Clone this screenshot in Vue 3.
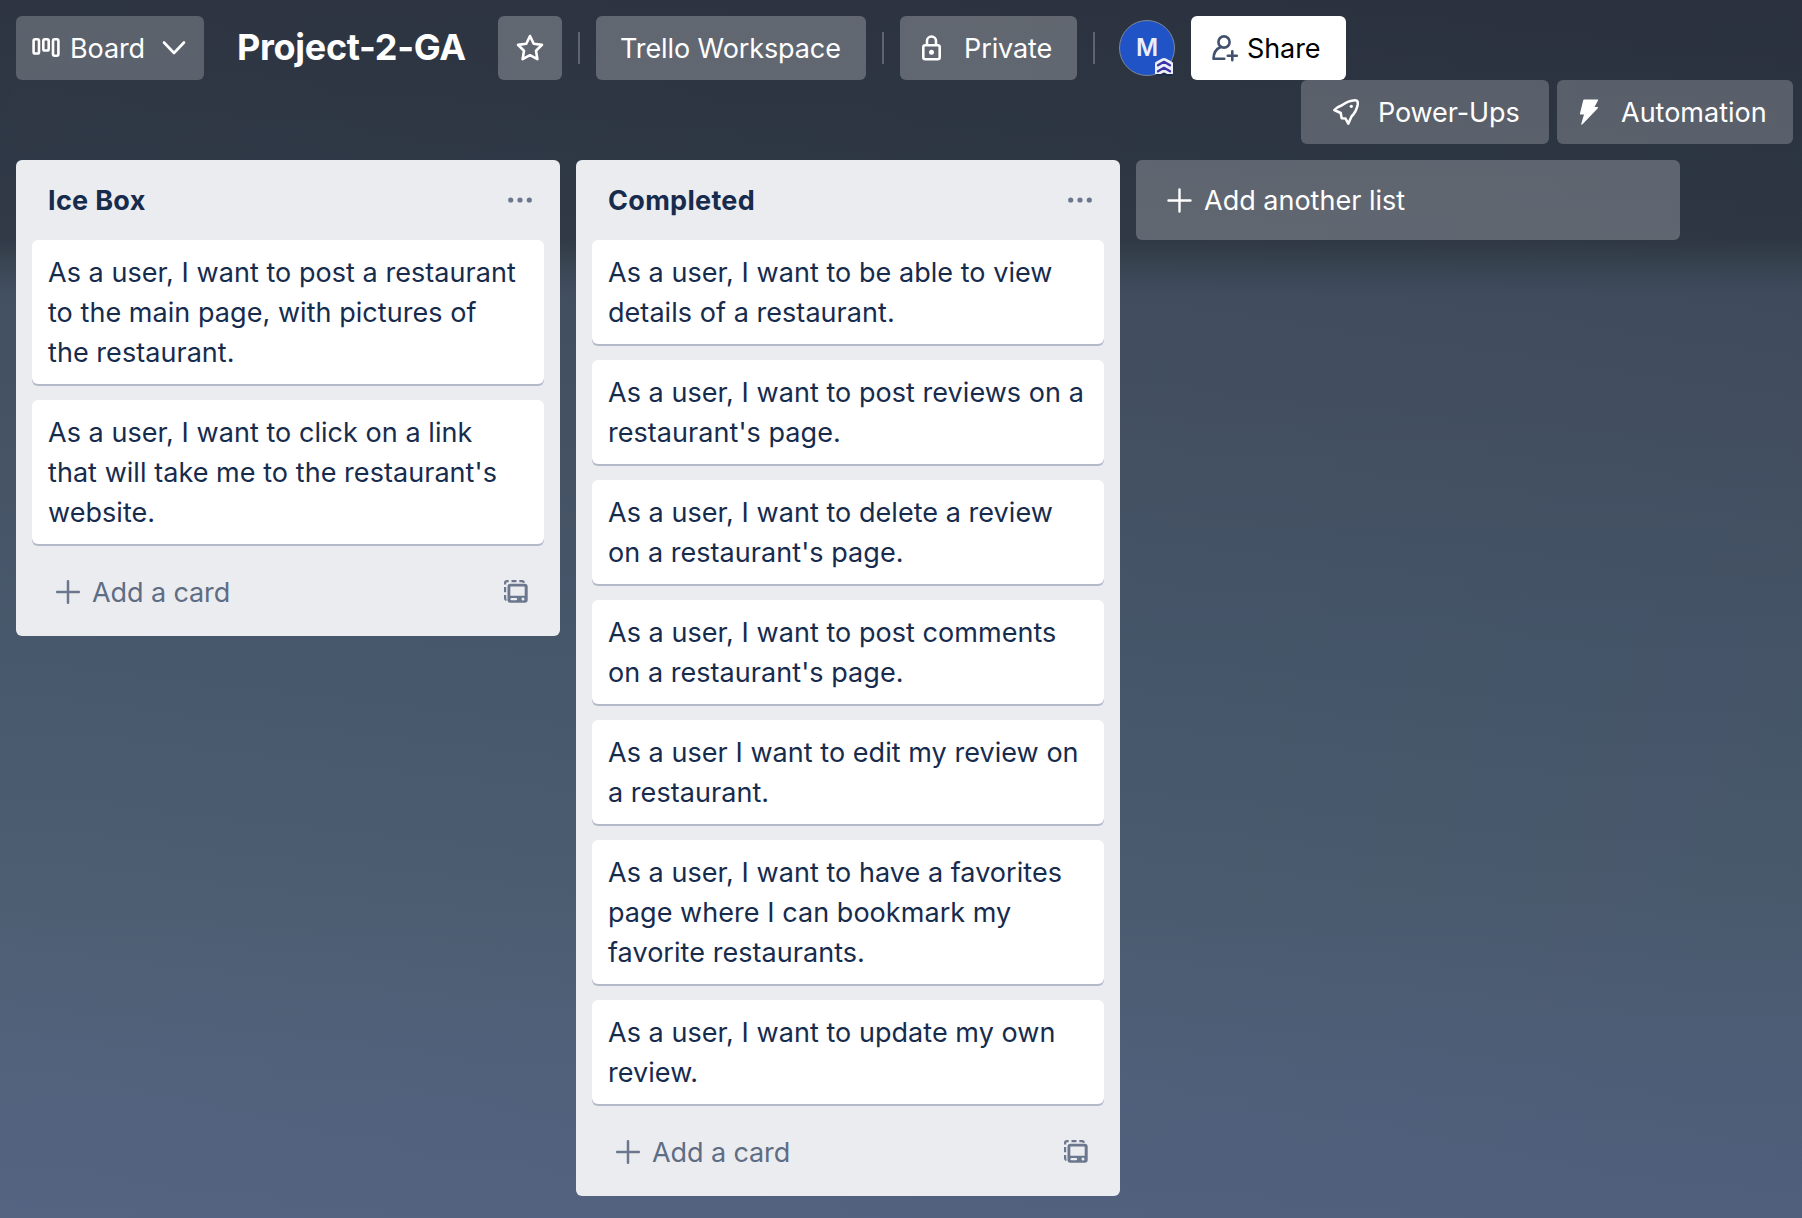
<script setup>
const lists = [
  {
    title: 'Ice Box',
    cards: [
      ['As a user, I want to post a restaurant', 'to the main page, with pictures of', 'the restaurant.'],
      ['As a user, I want to click on a link', "that will take me to the restaurant's", 'website.'],
    ],
  },
  {
    title: 'Completed',
    cards: [
      ['As a user, I want to be able to view', 'details of a restaurant.'],
      ['As a user, I want to post reviews on a', "restaurant's page."],
      ['As a user, I want to delete a review', "on a restaurant's page."],
      ['As a user, I want to post comments', "on a restaurant's page."],
      ['As a user I want to edit my review on', 'a restaurant.'],
      ['As a user, I want to have a favorites', 'page where I can bookmark my', 'favorite restaurants.'],
      ['As a user, I want to update my own', 'review.'],
    ],
  },
]
</script>

<template>
  <div class="app">
    <header class="header">
      <div class="row">
        <button class="btn board">
          <svg class="i-board" width="28" height="24" viewBox="0 0 28 24" fill="none" stroke="#fff" stroke-width="2.6">
            <rect x="1.6" y="3.3" width="5.4" height="14.2" rx="1.6" />
            <rect x="11.3" y="3.3" width="5.4" height="11.2" rx="1.6" />
            <rect x="21" y="3.3" width="5.4" height="16.4" rx="1.6" />
          </svg>
          <span>Board</span>
          <svg class="i-chev" width="24" height="16" viewBox="0 0 24 16" fill="none" stroke="#fff" stroke-width="2.6" stroke-linecap="round" stroke-linejoin="round">
            <path d="M2 2.5 12 13 22 2.5" />
          </svg>
        </button>
        <h1>Project-2-GA</h1>
        <button class="btn star">
          <svg width="30" height="30" viewBox="0 0 30 30" fill="none" stroke="#fff" stroke-width="2.6" stroke-linejoin="round">
            <path d="M15 3 L18.7 10.7 27 11.9 21 17.7 22.4 26.2 15 22.2 7.6 26.2 9 17.7 3 11.9 11.3 10.7Z" />
          </svg>
        </button>
        <i class="divider"></i>
        <button class="btn workspace"><span>Trello Workspace</span></button>
        <i class="divider"></i>
        <button class="btn private">
          <svg width="22" height="28" viewBox="0 0 22 28" fill="none" stroke="#fff" stroke-width="2.6">
            <rect x="3.3" y="11.3" width="16.4" height="14" rx="2" />
            <path d="M7 11V7a4.5 4.5 0 0 1 9 0v4" />
            <circle cx="11.5" cy="18.3" r="2.5" fill="#fff" stroke="none" />
          </svg>
          <span>Private</span>
        </button>
        <i class="divider"></i>
        <div class="avatar">
          <span>M</span>
          <svg class="badge" width="18" height="18" viewBox="0 0 18 18">
            <path d="M0 5.5Q0 4.500 1 3.800L6.500.7Q9-.6 11.500.7L17 3.800Q18 4.500 18 5.500V16H12L9 14.500 6 16H0Z" fill="#eceef6" />
            <path d="M1 17H6L9 15.500 12 17H17.500" fill="none" stroke="#172b4d" stroke-width="1.4" />
            <path d="M3 7.300 9 3.800 15 7.300M3 13.300 9 9.800 15 13.300" fill="none" stroke="#3a32a8" stroke-width="2.3" stroke-linecap="round" stroke-linejoin="round" />
          </svg>
        </div>
        <button class="btn share">
          <svg width="27" height="28" viewBox="0 0 27 28" fill="none" stroke="#42526e" stroke-width="2.6" stroke-linecap="round" stroke-linejoin="round">
            <circle cx="12" cy="8" r="5.6" />
            <path d="M8.600 13C4 15 1.500 19 1.500 24.700H12.300M20.300 17.200V26.200M15.800 21.700H24.800" />
          </svg>
          <span>Share</span>
        </button>
      </div>
      <div class="row tools">
        <button class="btn power">
          <svg width="28" height="28" viewBox="0 0 28 28" fill="none" stroke="#fff" stroke-width="2.5" stroke-linejoin="round">
            <path d="M9.500 7.500C13 5 18 2.500 23 2.300 25.700 2.200 26 4 25.700 6.500 25 11 22 16 19.500 18.500L16.300 25.700 13.500 20.500 9.700 20.300 8.700 15 2.300 12Q5 9 9.500 7.500Z" />
            <circle cx="19.3" cy="8.3" r="1.6" fill="#fff" stroke="none" />
          </svg>
          <span>Power-Ups</span>
        </button>
        <button class="btn auto">
          <svg width="20" height="28" viewBox="0 0 20 28" fill="#fff">
            <path d="M5.200 1.500H18.500Q19.500 1.500 19 2.500L15.500 9H18.300Q19.600 9 18.800 10.200L3.500 26.300Q1.800 27.500 2.300 25.700L5 16.500H1.500Q.7 16.500 1 15.500L4.200 2.300Q4.400 1.500 5.200 1.500Z" />
          </svg>
          <span>Automation</span>
        </button>
      </div>
    </header>

    <main class="lists">
      <section v-for="list in lists" :key="list.title" class="list">
        <div class="head">
          <h2>{{ list.title }}</h2>
          <svg width="24" height="6" viewBox="0 0 24 6" fill="#6b778c">
            <circle cx="2.7" cy="3" r="2.6" /><circle cx="12" cy="3" r="2.6" /><circle cx="21.3" cy="3" r="2.6" />
          </svg>
        </div>
        <article v-for="(card, i) in list.cards" :key="i" class="card">
          <div v-for="line in card" :key="line">{{ line }}</div>
        </article>
        <div class="foot">
          <svg width="24" height="24" viewBox="0 0 24 24" stroke="#6b778c" stroke-width="2.5" stroke-linecap="round"><path d="M12 1.200V22.800M1.200 12H22.800" /></svg>
          <span>Add a card</span>
          <svg class="template" width="24" height="24" viewBox="0 0 24 24" fill="none" stroke="#6b778c" stroke-width="2.2">
            <path d="M1.100 4.500V3Q1.100 1.200 3 1.200H4.700M7.500 1.200H12.500M15.300 1.200H18Q19.700 1.200 20 2.800M1.100 7V12.300M1.100 15V18Q1.100 19.700 2.500 19.800" />
            <path fill-rule="evenodd" stroke="none" fill="#6b778c" d="M6.300 3.700H20.700Q23.700 3.700 23.700 6.700V19.800Q23.700 22.800 20.700 22.800H6.300Q3.500 22.800 3.500 19.800V6.700Q3.500 3.700 6.300 3.700ZM7 6.500Q6.300 6.500 6.300 7.300V15.800H20.700V7.300Q20.700 6.500 20 6.500ZM7.600 17.900Q6.400 17.900 6.400 19.100T7.600 20.300H12Q13.200 20.300 13.200 19.100T12 17.900ZM19 17.600A1.500 1.500 0 1 0 19 20.600 1.500 1.500 0 0 0 19 17.600Z" />
          </svg>
        </div>
      </section>
      <button class="add-list">
        <svg width="25" height="25" viewBox="0 0 25 25" stroke="#fff" stroke-width="2.4" stroke-linecap="round"><path d="M12.500 1.500V23.500M1.500 12.500H23.500" /></svg>
        <span>Add another list</span>
      </button>
    </main>
  </div>
</template>

<style>
body { margin: 0; }
</style>

<style scoped>
* { box-sizing: border-box; }
.app {
  width: 1802px;
  height: 1218px;
  overflow: hidden;
  font-family: Inter, "Liberation Sans", sans-serif;
  font-size: 27px;
  font-weight: 440;
  color: #172b4d;
  background:
    linear-gradient(90deg, rgba(255, 255, 255, .012), rgba(0, 0, 0, .035)),
    linear-gradient(180deg, #2c3340 0, #2d3644 150px, #303846 240px, #374350 262px, #414e60 295px, #435062 400px, #46566a 640px, #4c5c70 900px, #50607a 1050px, #526280 1218px);
}
button { font: inherit; border: 0; margin: 0; padding: 0; text-align: left; }
svg { display: block; flex: none; }
.header { height: 160px; padding-top: 16px; }
.row { display: flex; height: 64px; padding-left: 16px; }
.btn {
  display: flex;
  align-items: center;
  height: 64px;
  border-radius: 6px;
  background: rgba(255, 255, 255, .22);
  color: #fff;
  letter-spacing: -.1px;
  white-space: nowrap;
}
.board { width: 188px; padding-left: 16px; }
.board span { margin-left: 10px; width: 76px; }
.i-chev { margin-left: 16px; }
h1 { margin: 0 0 0 33px; width: 261px; font-size: 36px; line-height: 62px; font-weight: 700; color: #fff; letter-spacing: -.3px; white-space: nowrap; }
.star { width: 64px; justify-content: center; background: rgba(255, 255, 255, .25); }
.divider { width: 2px; height: 32px; margin: 16px 16px 0; background: rgba(255, 255, 255, .24); }
.workspace { width: 270px; padding-left: 24px; background: rgba(255, 255, 255, .25); }
.private { width: 177px; padding-left: 20px; background: rgba(255, 255, 255, .25); }
.private span { margin-left: 22px; }
.avatar { position: relative; width: 56px; height: 56px; margin: 4px 16px 0 8px; border-radius: 50%; background: #2053c5; color: #e9eefb; font-size: 24px; font-weight: 600; text-align: center; border: 1px solid #7f8794; line-height: 54px; }
.badge { position: absolute; right: 1px; bottom: -1px; }
.share { width: 155px; padding-left: 21px; background: #fff; color: #000; }
.share span { margin-left: 8px; }
.tools { justify-content: flex-end; padding-right: 9px; gap: 8px; }
.power { width: 248px; padding-left: 31px; }
.power span { margin-left: 18px; }
.auto { width: 236px; padding-left: 22px; }
.auto span { margin-left: 22px; letter-spacing: 0; }
.lists { display: flex; align-items: flex-start; gap: 16px; padding-left: 16px; }
.list { width: 544px; padding: 0 16px; border-radius: 6px; background: #ebecf0; }
.head { display: flex; align-items: center; justify-content: space-between; height: 80px; padding: 0 12px 0 16px; }
h2 { margin: 0; font-size: 27px; font-weight: 650; letter-spacing: .3px; }
.card { margin-bottom: 16px; padding: 13px 16px 11px; border-radius: 6px; background: #fff; box-shadow: 0 2px 0 #b3b9c8; line-height: 40px; font-weight: 425; letter-spacing: .05px; white-space: nowrap; }
.foot { display: flex; align-items: center; height: 76px; padding: 0 16px 12px 24px; color: #5e6c84; }
.foot span { margin-left: 12px; letter-spacing: -.1px; }
.foot .template { margin-left: auto; }
.add-list { display: flex; align-items: center; width: 544px; height: 80px; padding-left: 31px; border-radius: 6px; background: rgba(255, 255, 255, .24); color: #fff; }
.add-list span { margin-left: 12px; }
</style>
